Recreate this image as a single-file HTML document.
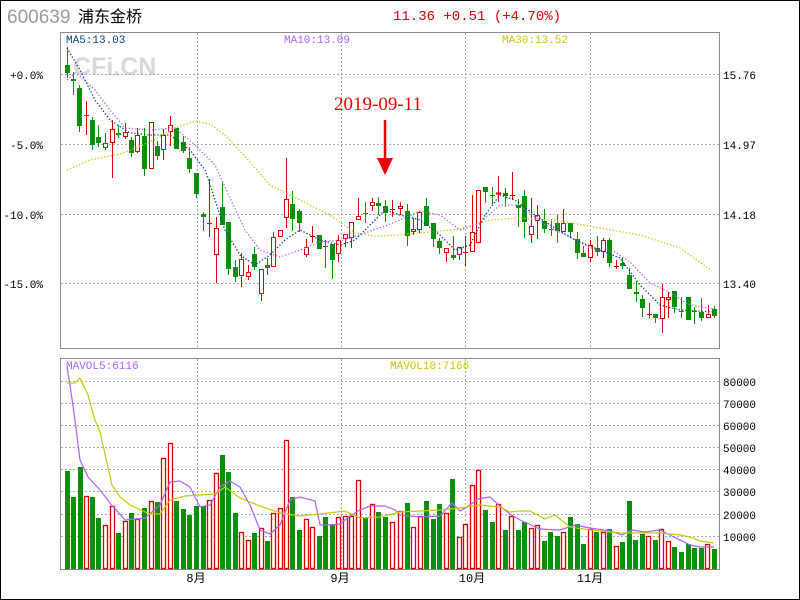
<!DOCTYPE html>
<html><head><meta charset="utf-8"><style>
html,body{margin:0;padding:0;background:#fff;}
svg{display:block;font-family:"Liberation Mono","Noto Sans CJK SC",monospace;}
</style></head><body>
<svg id="s" width="800" height="600" viewBox="0 0 800 600" xmlns="http://www.w3.org/2000/svg">
<rect x="0.5" y="0.5" width="799" height="599" fill="#fff" stroke="#000"/>
<text x="7" y="23" font-family="Liberation Sans,sans-serif" font-size="19" fill="#999">600639</text>
<text x="78" y="22" font-family="Liberation Sans,'Noto Sans CJK SC',sans-serif" font-size="16" fill="#000">浦东金桥</text>
<text x="393" y="20" font-size="14" fill="#d00">11.36 +0.51 (+4.70%)</text>
<rect x="60.5" y="32.5" width="659" height="316" fill="none" stroke="#888"/>
<rect x="60.5" y="358.5" width="659" height="211" fill="none" stroke="#888"/>
<text x="73" y="75" font-family="Liberation Sans,sans-serif" font-weight="bold" font-size="25" fill="#d8d8d8">CFi.CN</text>
<g id="grid" stroke="#aaa" stroke-dasharray="2,2"></g>
<g font-size="11" fill="#000">
<text x="43" y="79" text-anchor="end">+0.0%</text>
<text x="43" y="149" text-anchor="end">-5.0%</text>
<text x="43" y="219" text-anchor="end">-10.0%</text>
<text x="43" y="288" text-anchor="end">-15.0%</text>
<text x="723" y="79">15.76</text>
<text x="723" y="149">14.97</text>
<text x="723" y="219">14.18</text>
<text x="723" y="288">13.40</text>
<text x="723" y="386">80000</text>
<text x="723" y="408">70000</text>
<text x="723" y="430">60000</text>
<text x="723" y="452">50000</text>
<text x="723" y="474">40000</text>
<text x="723" y="496">30000</text>
<text x="723" y="519">20000</text>
<text x="723" y="541">10000</text>
</g>
<g font-size="12" fill="#000" font-family="Liberation Mono,'Noto Sans CJK SC',monospace">
<text x="196" y="582" text-anchor="middle">8月</text>
<text x="340" y="582" text-anchor="middle">9月</text>
<text x="472" y="582" text-anchor="middle">10月</text>
<text x="590" y="582" text-anchor="middle">11月</text>
</g>
<g font-size="11">
<text x="66" y="43" fill="#004488">MA5:13.03</text>
<text x="284" y="43" fill="#b060ff">MA10:13.09</text>
<text x="502" y="43" fill="#c8c800">MA30:13.52</text>
<text x="66" y="369" fill="#b060ff">MAVOL5:6116</text>
<text x="390" y="369" fill="#c8c800">MAVOL10:7166</text>
</g>
<g id="c"></g>
<text x="334" y="110" font-size="19" fill="#e00" font-family="Liberation Serif,serif">2019-09-11</text>
<line x1="385" y1="120" x2="385" y2="162" stroke="#e00" stroke-width="2.5"/>
<polygon points="377,158 393,158 385,175" fill="#e00"/>
</svg>
<script>
var NS="http://www.w3.org/2000/svg",g=document.getElementById('grid'),c=document.getElementById('c');
function el(p,t,a){var e=document.createElementNS(NS,t);for(var k in a)e.setAttribute(k,a[k]);p.appendChild(e);return e;}
[74,144,214,283].forEach(function(y){el(g,'line',{x1:61,x2:719,y1:y+.5,y2:y+.5});});
[381,403,425,447,469,491,514,536].forEach(function(y){el(g,'line',{x1:61,x2:719,y1:y+.5,y2:y+.5});});
[197,341,465,590].forEach(function(x){el(g,'line',{x1:x+.5,x2:x+.5,y1:33,y2:348});el(g,'line',{x1:x+.5,x2:x+.5,y1:359,y2:569});});
var G="#089108",R="#d00";
var K=[[67,65,73,47,78,0],[73,79,81,72,95,0],[79,88,126,85,132,0],[86,115,115,101,135,1],[92,120,145,117,150,0],[98,137,143,125,147,0],[105,143,147,133,150,1],[112,129,142,120,178,1],[118,133,135,125,138,0],[125,132,136,123,139,1],[131,140,153,137,157,0],[137,135,151,128,153,1],[144,136,169,128,176,0],[151,122,168,122,168,1],[157,146,156,141,160,0],[163,135,149,129,160,1],[170,125,131,116,146,1],[176,128,149,128,149,0],[183,142,151,136,153,0],[189,158,169,147,173,0],[196,173,194,173,198,0],[203,214,217,212,231,0],[209,223,223,179,237,1],[216,228,254,217,283,1],[222,207,225,181,225,0],[228,222,269,222,275,0],[235,267,277,260,282,0],[241,259,275,253,287,1],[248,272,276,265,280,1],[254,254,267,247,270,0],[261,269,293,269,301,1],[267,265,268,258,275,0],[273,237,266,232,266,1],[280,230,236,230,237,1],[286,199,217,158,228,1],[292,204,219,191,231,0],[299,211,223,209,232,0],[306,247,254,239,257,1],[312,236,236,226,243,1],[319,235,249,235,249,0],[325,246,246,240,268,0],[332,244,260,244,279,0],[338,240,253,235,262,1],[345,234,238,234,247,1],[351,222,237,222,248,1],[358,216,219,198,219,1],[365,213,213,202,223,0],[372,202,205,198,211,1],[378,203,206,197,215,0],[385,206,213,200,222,0],[392,209,209,200,217,1],[400,206,208,202,215,1],[407,211,236,204,246,0],[413,229,231,218,235,1],[419,212,229,211,233,1],[426,206,226,198,226,0],[433,223,239,223,247,0],[439,241,248,238,254,0],[446,248,252,248,262,1],[453,255,258,236,260,0],[459,247,254,247,260,1],[465,252,252,236,266,1],[472,232,251,195,251,1],[478,190,242,190,242,1],[485,187,192,187,203,0],[492,195,195,187,204,0],[498,193,194,176,202,1],[505,193,196,188,207,0],[512,195,195,172,200,1],[518,205,208,199,227,0],[524,196,222,190,238,0],[531,226,234,198,243,1],[537,215,220,205,239,1],[544,221,229,209,233,0],[551,229,229,219,236,0],[557,223,231,215,243,0],[563,223,231,209,231,1],[570,223,232,223,238,0],[577,239,253,232,259,0],[583,253,257,246,257,0],[590,245,257,240,262,1],[597,248,252,236,256,0],[603,240,251,238,258,1],[609,240,263,238,267,0],[616,266,266,260,269,1],[622,263,266,258,269,0],[629,275,289,268,289,0],[636,292,294,281,302,0],[642,299,308,295,317,0],[649,314,314,303,318,1],[655,314,318,314,323,0],[662,297,318,284,333,1],[668,297,299,292,318,1],[674,291,307,291,313,0],[681,311,311,297,318,0],[688,297,320,297,320,0],[694,311,311,307,324,0],[701,312,318,298,321,0],[708,314,317,305,318,1],[714,309,316,306,318,0]];
K.forEach(function(k){var col=k[5]?R:G;
 el(c,'line',{x1:k[0]+.5,x2:k[0]+.5,y1:k[3],y2:k[4],stroke:col});
 var h=k[2]-k[1];
 if(h<2){el(c,'line',{x1:k[0]-2,x2:k[0]+3,y1:k[1]+.5,y2:k[1]+.5,stroke:col,'stroke-width':h<1?1:2});}
 else if(k[5]) el(c,'rect',{x:k[0]-1.5,y:k[1]+.5,width:4,height:h,fill:'#fff',stroke:col});
 else el(c,'rect',{x:k[0]-2,y:k[1],width:5,height:h,fill:col});
});
var V=[[67,471,0],[73,497,0],[80,467,0],[86,496,1],[92,497,0],[98,518,0],[105,525,1],[112,506,1],[118,533,0],[125,521,1],[131,513,0],[137,519,1],[144,508,0],[151,501,1],[157,502,0],[163,458,1],[170,443,1],[176,501,0],[183,509,0],[189,515,0],[196,506,0],[203,506,0],[209,500,1],[216,473,1],[222,455,0],[228,472,0],[235,513,0],[241,532,1],[248,540,1],[254,533,0],[261,528,1],[267,541,0],[273,513,1],[280,508,1],[286,440,1],[292,497,0],[299,530,0],[306,519,1],[312,527,1],[319,536,0],[325,517,0],[332,524,0],[338,517,1],[345,516,1],[351,516,1],[358,480,1],[365,518,0],[372,504,1],[378,512,0],[385,517,0],[392,522,1],[400,511,1],[407,503,0],[413,527,1],[420,516,1],[426,501,0],[433,519,0],[439,504,0],[446,513,1],[452,479,0],[459,537,1],[465,524,1],[472,485,1],[478,470,1],[485,510,0],[492,522,0],[498,504,1],[505,530,0],[511,516,1],[518,530,0],[524,522,0],[531,528,1],[537,525,1],[544,541,0],[550,532,0],[557,536,0],[563,532,1],[570,517,0],[577,524,0],[583,544,0],[590,529,1],[596,532,0],[603,532,1],[609,529,0],[616,546,1],[622,542,0],[629,501,0],[635,540,0],[642,534,0],[648,536,1],[655,540,0],[661,529,1],[668,541,1],[674,547,0],[681,552,0],[688,544,0],[694,548,0],[701,548,0],[707,544,1],[714,549,0]];
V.forEach(function(v){if(v[2])el(c,'rect',{x:v[0]-1.5,y:v[1]+.5,width:4,height:569-v[1]-1,fill:'#fff',stroke:R,'stroke-width':1.3});else el(c,'rect',{x:v[0]-2,y:v[1],width:5,height:569-v[1],fill:G});});
function pl(pts,col,dash){el(c,'polyline',{points:pts,fill:'none',stroke:col,'stroke-width':dash?1.3:1.2,'stroke-dasharray':dash?'1.3,2':'none'});}
pl("67,170 90,160 120,154 150,142 175,128 195,121 210,124 225,135 250,162 270,185 300,200 330,215 355,233 375,236 400,235 430,232 460,229 490,220 520,218 560,221 600,228 640,235 680,248 712,271","#c8c800",1);
pl("67,80 75,73 80,76 95,90 110,110 125,128 150,130 175,128 195,145 215,165 230,198 245,230 260,250 280,257 300,250 320,242 345,240 365,233 385,226 400,220 420,211 440,215 460,230 480,223 500,205 520,205 545,225 570,237 590,248 615,252 630,262 650,283 665,290 690,305 714,309","#b060ff",1);
pl("67,48 80,70 95,100 110,120 130,133 150,135 170,135 190,150 205,170 215,200 225,230 240,255 255,265 270,255 285,240 300,230 320,240 340,245 355,240 370,225 385,210 400,215 420,220 440,235 455,250 470,245 485,215 500,195 515,200 535,215 555,228 575,240 600,250 620,258 640,285 660,305 680,310 714,312","#004488",1);
pl("67,367 70,385 75,420 80,460 88,477 100,490 110,503 125,520 135,519 145,518 160,505 170,482 180,481 190,487 200,507 210,505 220,487 230,481 240,487 250,505 260,530 270,534 280,525 290,500 300,497 315,501 320,525 330,525 340,524 350,516 360,510 370,506 385,506 395,510 400,515 420,517 440,516 452,503 460,511 470,505 478,499 490,497 500,506 510,514 520,520 540,529 560,530 575,525 590,528 610,531 622,535 632,530 645,532 660,530 670,535 690,545 700,547 714,547","#b060ff",0);
pl("67,383 75,383 80,378 88,395 95,420 100,432 112,485 120,497 130,505 150,514 160,514 170,500 185,496 200,495 215,494 225,487 240,498 260,506 280,513 300,516 320,514 345,511 360,518 380,517 400,512 420,511 440,510 460,508 480,505 500,507 510,512 520,511 530,511 545,519 555,515 570,527 590,530 620,533 640,533 660,533 680,535 690,537 700,541 714,543","#c8c800",0);
</script>
</body></html>
